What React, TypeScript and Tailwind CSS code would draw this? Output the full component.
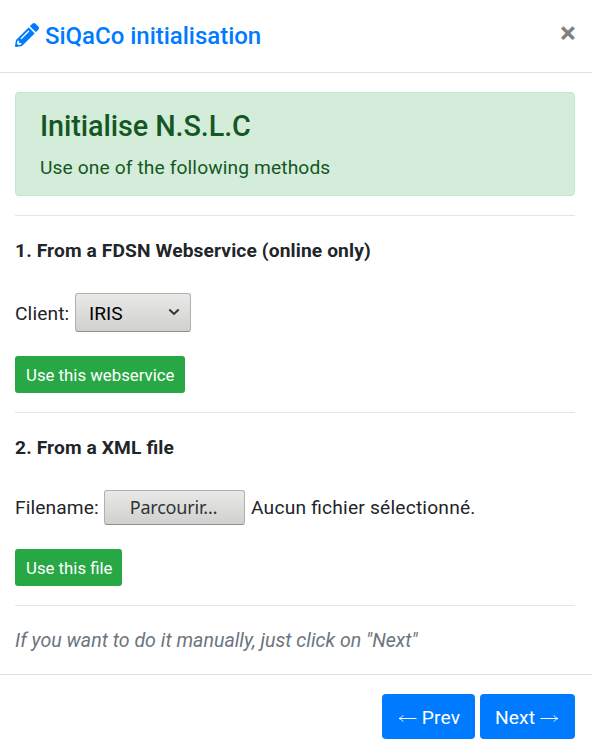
import type { ReactNode } from "react";
import { FaPencilAlt } from "react-icons/fa";

function Arrow({ flip = false }: { flip?: boolean }) {
  return (
    <svg
      width="19"
      height="10"
      viewBox="0 0 19 10"
      fill="none"
      stroke="currentColor"
      strokeWidth="1"
      className={flip ? "mt-[5px] -scale-x-100" : "mt-[5px]"}
    >
      <path d="M0.5 4.5H17.5M14 1.3C15 3 16 4 18 4.5C16 5 15 6 14 7.7" />
    </svg>
  );
}

function GreenButton({ children, width }: { children: ReactNode; width: string }) {
  return (
    <button
      className={`block h-[37px] rounded-[3px] bg-[#28a745] pt-px pl-[11px] text-left text-[16.8px] tracking-normal whitespace-nowrap text-white ${width}`}
    >
      {children}
    </button>
  );
}

export default function App() {
  return (
    <div className="flex h-[756px] w-[592px] flex-col bg-white font-[Roboto,sans-serif] text-[19.2px] leading-[29px] tracking-[0.12px] text-[#212529] [font-feature-settings:'liga'_1]">
      <header className="flex h-[73px] shrink-0 items-start justify-between border-b border-[#dee2e6] px-[15px]">
        <h5 className="mt-[18px] flex items-center text-[24px] leading-[36px] font-medium tracking-[-0.02px] text-[#007bff]">
          <FaPencilAlt className="mr-[6px] -mt-[2px] size-[24px]" />
          SiQaCo initialisation
        </h5>
        <button aria-label="Close" className="mt-[15px] mr-px text-[30px] leading-[36px] font-bold text-[#7f7f7f]">
          ×
        </button>
      </header>

      <main className="flex h-[601px] shrink-0 flex-col items-start px-[15px] pt-[19px] pr-[17px]">
        <section className="h-[104px] w-full rounded-[4px] border border-[#c3e6cb] bg-[#d4edda] px-[24px] pt-[16px] text-[#155724]">
          <h4 className="text-[28.8px] leading-[35px] font-medium tracking-[-0.08px]">Initialise N.S.L.C</h4>
          <p className="mt-[9px]">Use one of the following methods</p>
        </section>
        <hr className="mt-[19px] w-full border-[#e5e5e5]" />
        <p className="mt-[20px] font-bold">1. From a FDSN Webservice (online only)</p>
        <div className="mt-[28px] flex h-[39px] items-center">
          <span className="mt-[2px] w-[60px]">Client:</span>
          <button className="flex h-[39px] w-[116px] items-center justify-between rounded-[3px] border border-[#b1b1ae] border-b-[#8f8f8c] bg-linear-to-b from-[#e9e9e7] to-[#d0d0ce] pr-[10px] pl-[13px] text-[19.2px] tracking-normal text-black">
            <span className="mt-[2px]">IRIS</span>
            <svg width="12" height="8" viewBox="0 0 12 8" fill="none" stroke="#2e3436" strokeWidth="1.9" className="-mt-[2px]">
              <path d="M1.3 1.5L6 6L10.7 1.5" />
            </svg>
          </button>
        </div>
        <div className="mt-[24px]">
          <GreenButton width="w-[170px]">Use this webservice</GreenButton>
        </div>
        <hr className="mt-[19px] w-full border-[#e5e5e5]" />
        <p className="mt-[20px] font-bold">2. From a XML file</p>
        <div className="mt-[28px] flex h-[35px] items-center">
          <span className="w-[89px]">Filename:</span>
          <button className="h-[35px] w-[141px] rounded-[3px] border border-[#b1b1ae] border-b-[#8f8f8c] bg-linear-to-b from-[#e9e9e7] to-[#d0d0ce] pr-[2px] font-['Noto_Sans',sans-serif] text-[18px] tracking-[-0.2px] text-[#2e3436]">
            Parcourir…
          </button>
          <span className="ml-[6px] tracking-[0.2px]">Aucun fichier sélectionné.</span>
        </div>
        <div className="mt-[24px]">
          <GreenButton width="w-[107px]">Use this file</GreenButton>
        </div>
        <hr className="mt-[19px] w-full border-[#e5e5e5]" />
        <p className="mt-[20px] text-[19.6px] tracking-normal text-[#6c757d] italic">
          If you want to do it manually, just click on "Next"
        </p>
      </main>

      <footer className="flex grow items-start justify-end gap-[5px] border-t border-[#dee2e6] pt-[19px] pr-[17px] text-white">
        <button className="flex h-[45px] w-[93px] items-center justify-center gap-[5px] rounded-[4px] bg-[#007bff] pl-px">
          <Arrow flip />
          <span className="mt-[2px]">Prev</span>
        </button>
        <button className="flex h-[45px] w-[95px] items-center justify-center gap-[5px] rounded-[4px] bg-[#007bff] pr-px">
          <span className="mt-[2px]">Next</span>
          <Arrow />
        </button>
      </footer>
    </div>
  );
}
